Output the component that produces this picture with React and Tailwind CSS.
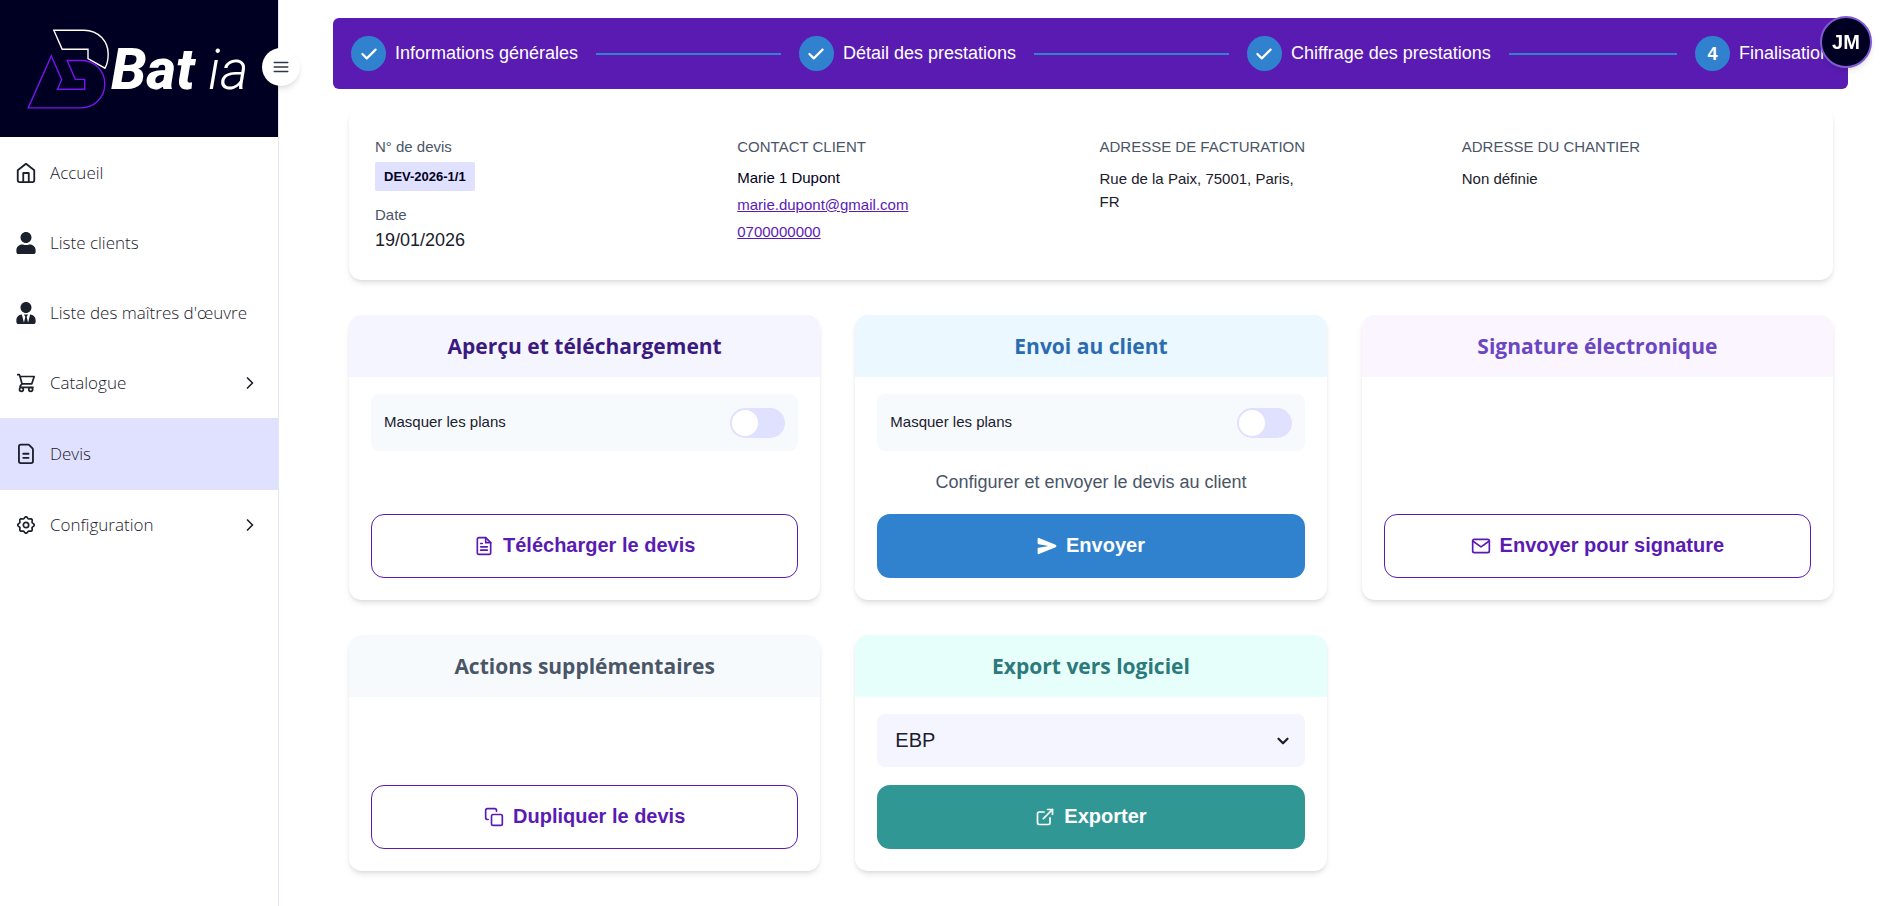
import React, { useState } from "react";
import { FiHome, FiChevronRight, FiChevronDown, FiMenu, FiFileText, FiMail, FiCopy, FiExternalLink } from "react-icons/fi";
import { FaUser, FaUserTie } from "react-icons/fa";
import { IoSend } from "react-icons/io5";
import { HiCheck } from "react-icons/hi";

function DocumentIcon({ size = 22 }) {
  return (
    <svg width={size} height={size} viewBox="0 0 24 24" fill="none" stroke="currentColor" strokeWidth="2" strokeLinecap="round" strokeLinejoin="round" aria-hidden="true">
      <path d="M6.3 1.8h8.2a1.5 1.5 0 0 1 1.1.45l3.500 3.700a1.800 1.800 0 0 1 .5 1.200V20a2 2 0 0 1-2 2H6.300a2 2 0 0 1-2-2V3.800a2 2 0 0 1 2-2z" />
      <path d="M9 11.700h5.800M9 16.200h5.800" />
    </svg>
  );
}

function CartIcon({ size = 22 }) {
  return (
    <svg width={size} height={size} viewBox="0 0 22 22" fill="none" stroke="currentColor" strokeWidth="1.7" strokeLinecap="round" strokeLinejoin="round" aria-hidden="true">
      <path d="M2.700 2.700h1.700l.6 1.800M5 4.500h14.200l-2.400 7.300H7z" />
      <path d="M7 11.800l-1.800 2.300a.8.8 0 0 0 .6 1.300h12.200" />
      <circle cx="6.400" cy="17.400" r="1.900" />
      <circle cx="15.700" cy="17.400" r="1.900" />
    </svg>
  );
}

// Outline of an eight-lobed gear centred on (11, 11).
const GEAR_POINTS = Array.from({ length: 96 }, (_, i) => {
  const angle = (i / 96) * 2 * Math.PI;
  const radius = 7.4 + 0.8 * Math.cos(8 * angle);
  return `${(11 + radius * Math.cos(angle)).toFixed(2)},${(11 + radius * Math.sin(angle)).toFixed(2)}`;
}).join(" ");

function GearIcon({ size = 22 }) {
  return (
    <svg width={size} height={size} viewBox="0 0 22 22" fill="none" stroke="currentColor" strokeWidth="1.7" strokeLinejoin="round" aria-hidden="true">
      <polygon points={GEAR_POINTS} />
      <circle cx="11" cy="11" r="2.700" />
    </svg>
  );
}

function Logo() {
  return (
    <svg width="278" height="137" viewBox="0 0 278 137" fill="none" role="img" aria-label="Bat ia">
      <path d="M53.8 30.2H84C99 30.2 108.2 42 108.2 54C108.2 60 107 64.500 105 68.200L88 58.700V49.200H62.200Z" stroke="#ffffff" strokeWidth="1.400" />
      <path d="M51.300 56L61.700 79.400L57.500 89.300H84.700V79.400H75.300L67.200 60.500H81.500C95 60.500 104.800 71 104.800 84C104.800 98 94 107.900 80 107.900H28.200Z" stroke="#7a14f0" strokeWidth="1.400" />
      <text x="111" y="89" fill="#ffffff" fontSize="57" className="font-['Roboto',sans-serif] font-extrabold italic">Bat</text>
      <text x="208" y="89" fill="#ffffff" fontSize="55" className="font-['Roboto',sans-serif] font-light italic">ia</text>
    </svg>
  );
}

const NAV = [
  { label: "Accueil", icon: FiHome },
  { label: "Liste clients", icon: FaUser },
  { label: "Liste des maîtres d'œuvre", icon: FaUserTie },
  { label: "Catalogue", icon: CartIcon, expandable: true },
  { label: "Devis", icon: DocumentIcon, active: true },
  { label: "Configuration", icon: GearIcon, expandable: true },
];

function Sidebar() {
  return (
    <aside className="relative w-[279px] shrink-0 border-r border-[#e2e8f0]">
      <div className="bg-[#000022]">
        <Logo />
      </div>
      <button type="button" aria-label="Replier le menu" className="absolute top-12 -right-[22px] flex size-[38px] items-center justify-center rounded-full bg-white text-[#2d3748] shadow-md">
        <FiMenu size={18} />
      </button>
      <nav className="mt-px">
        {NAV.map(({ label, icon: Icon, active, expandable }) => (
          <a
            key={label}
            href="#"
            aria-current={active ? "page" : undefined}
            className={`flex items-center px-[15px] font-['Open_Sans',sans-serif] text-[17px] font-[350] text-[#1a202c] ${active ? "h-[72px] bg-[#e0e0ff]" : "h-[70px]"}`}
          >
            <span className="flex w-[22px] justify-center">
              <Icon size={22} />
            </span>
            <span className="ml-[13px] flex-1 whitespace-nowrap">{label}</span>
            {expandable && <FiChevronRight size={20} className="mr-[3px]" />}
          </a>
        ))}
      </nav>
    </aside>
  );
}

const STEPS = ["Informations générales", "Détail des prestations", "Chiffrage des prestations", "Finalisation"];

function Stepper() {
  return (
    <ol className="flex items-center gap-[18px] rounded-md bg-[#5a1bb3] p-[18px] text-lg text-white">
      {STEPS.map((step, i) => {
        const last = i === STEPS.length - 1;
        return (
          <li key={step} className={`flex items-center ${last ? "shrink-0" : "min-w-0 flex-1"}`}>
            <span className="flex size-[35px] shrink-0 items-center justify-center rounded-full bg-[#3182ce] font-bold">
              {last ? i + 1 : <HiCheck size={22} />}
            </span>
            <span className="ml-[9px] pb-0.5 whitespace-nowrap">{step}</span>
            {!last && <span className="ml-[18px] h-0.5 flex-1 bg-[#3182ce]" />}
          </li>
        );
      })}
    </ol>
  );
}

function QuoteSummary() {
  const heading = "leading-[26px] text-[#4a5568]";
  const link = "text-[#5a1bb3] underline";
  return (
    <section className="grid grid-cols-4 gap-[18px] rounded-[13px] bg-white p-[27px] pl-[26px] text-[15px] leading-6 text-[#1a202c] shadow-md">
      <div>
        <p className={heading}>N° de devis</p>
        <p className="mt-0.5 flex">
          <span className="rounded-xs bg-[#e0e0ff] px-[9px] text-[13px] leading-[29px] font-bold text-[#000022]">DEV-2026-1/1</span>
        </p>
        <p className="mt-3 text-[#4a5568]">Date</p>
        <p className="text-lg leading-[26px]">19/01/2026</p>
      </div>
      <div className="flex flex-col items-start gap-[3px]">
        <h2 className={heading}>CONTACT CLIENT</h2>
        <p className="mt-[3px] text-[#000022]">Marie 1 Dupont</p>
        <a href="mailto:marie.dupont@gmail.com" className={link}>marie.dupont@gmail.com</a>
        <a href="tel:0700000000" className={link}>0700000000</a>
      </div>
      <div>
        <h2 className={heading}>ADRESSE DE FACTURATION</h2>
        <p className="mt-[7px] max-w-[215px] leading-[23px]">Rue de la Paix, 75001, Paris, FR</p>
      </div>
      <div>
        <h2 className={heading}>ADRESSE DU CHANTIER</h2>
        <p className="mt-[7px] leading-[23px]">Non définie</p>
      </div>
    </section>
  );
}

function Card({ title, headerClass, children }) {
  return (
    <section className="flex flex-col overflow-hidden rounded-[13px] bg-white shadow-md">
      <h2 className={`flex h-[62px] items-center justify-center pt-0.5 font-['Open_Sans',sans-serif] text-[21px] font-bold ${headerClass}`}>{title}</h2>
      <div className="flex flex-1 flex-col gap-[18px] px-[22px] pt-[17px] pb-[22px]">{children}</div>
    </section>
  );
}

function HidePlans({ id }) {
  const [on, setOn] = useState(false);
  return (
    <div className="flex h-[57px] items-center justify-between rounded-lg bg-[#f7fafc] px-[13px] text-[15px] text-[#1a202c]">
      <label htmlFor={id}>Masquer les plans</label>
      <input
        id={id}
        type="checkbox"
        role="switch"
        checked={on}
        onChange={(e) => setOn(e.target.checked)}
        className="h-[30px] w-[55px] cursor-pointer appearance-none rounded-full bg-[#e0e0ff] p-0.5 before:block before:size-[26px] before:rounded-full before:bg-white checked:bg-[#5a1bb3] checked:before:ml-[25px]"
      />
    </div>
  );
}

function ActionButton({ icon: Icon, variant, children }) {
  const styles = {
    outline: "border border-[#5a1bb3] text-[#5a1bb3]",
    blue: "bg-[#3182ce] text-white",
    teal: "bg-[#319795] text-white",
  };
  return (
    <button type="button" className={`mt-auto flex h-16 w-full items-center justify-center gap-[9px] rounded-[13px] text-xl font-bold ${styles[variant]}`}>
      <Icon size={20} />
      <span className="pb-0.5">{children}</span>
    </button>
  );
}

export default function App() {
  return (
    <div className="flex min-h-screen bg-white font-['Liberation_Sans',Arial,sans-serif]">
      <Sidebar />
      <main className="min-w-0 flex-1 pt-[18px] pr-12 pl-[54px]">
        <Stepper />
        <div className="flex flex-col gap-[35px] pt-[18px] pr-[15px] pb-8 pl-4">
          <QuoteSummary />
          <div className="grid grid-cols-3 gap-[35px]">
            <Card title="Aperçu et téléchargement" headerClass="bg-[#f5f5ff] text-[#3b1a80]">
              <HidePlans id="hide-plans-download" />
              <ActionButton icon={FiFileText} variant="outline">Télécharger le devis</ActionButton>
            </Card>
            <Card title="Envoi au client" headerClass="bg-[#ebf8ff] text-[#2b6cb0]">
              <HidePlans id="hide-plans-send" />
              <p className="text-center text-lg leading-[27px] text-[#4a5568]">Configurer et envoyer le devis au client</p>
              <ActionButton icon={IoSend} variant="blue">Envoyer</ActionButton>
            </Card>
            <Card title="Signature électronique" headerClass="bg-[#faf5ff] text-[#6b46c1]">
              <ActionButton icon={FiMail} variant="outline">Envoyer pour signature</ActionButton>
            </Card>
            <Card title="Actions supplémentaires" headerClass="bg-[#f7fafc] text-[#4a5568]">
              <ActionButton icon={FiCopy} variant="outline">Dupliquer le devis</ActionButton>
            </Card>
            <Card title="Export vers logiciel" headerClass="bg-[#e6fffa] text-[#2c7a7b]">
              <div className="relative">
                <select aria-label="Logiciel" defaultValue="EBP" className="block h-[53px] w-full appearance-none rounded-lg bg-[#f5f5ff] px-[18px] pb-0.5 text-xl text-[#1a202c]">
                  <option>EBP</option>
                </select>
                <FiChevronDown size={18} strokeWidth={3} className="pointer-events-none absolute top-[18px] right-[13px] text-[#1a202c]" />
              </div>
              <ActionButton icon={FiExternalLink} variant="teal">Exporter</ActionButton>
            </Card>
          </div>
        </div>
      </main>
      <button type="button" aria-label="Compte JM" className="fixed top-4 right-6 flex size-[52px] items-center justify-center rounded-full border-2 border-[#805ad5] bg-[#000022] text-xl font-bold text-white shadow-md">
        JM
      </button>
    </div>
  );
}
